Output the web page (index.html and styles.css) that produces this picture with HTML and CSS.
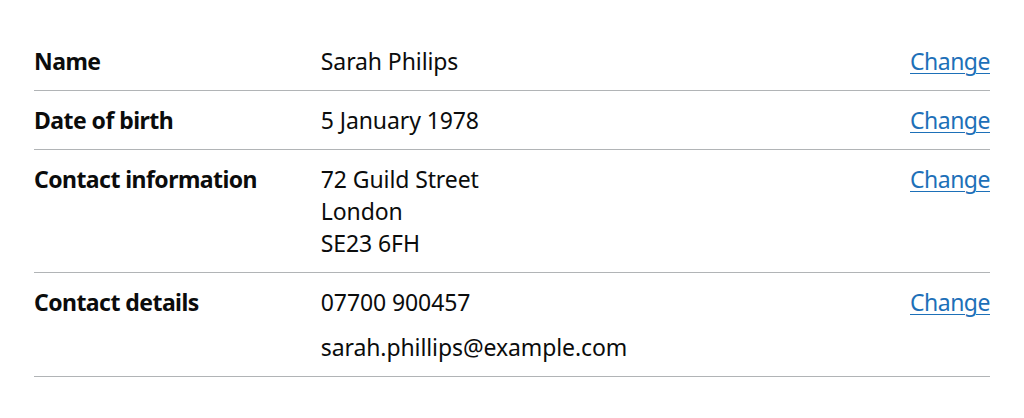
FILE: index.html
```html
<!DOCTYPE html>
<html lang="en">
<head>
<meta charset="utf-8">
<title>Summary list</title>
<link rel="stylesheet" href="styles.css">
</head>
<body>
<dl class="summary-list">
  <div class="summary-row">
    <dt class="summary-key">Name</dt>
    <dd class="summary-value">Sarah Philips</dd>
    <dd class="summary-actions"><a class="summary-link" href="#">Change</a></dd>
  </div>
  <div class="summary-row">
    <dt class="summary-key">Date of birth</dt>
    <dd class="summary-value">5 January 1978</dd>
    <dd class="summary-actions"><a class="summary-link" href="#">Change</a></dd>
  </div>
  <div class="summary-row">
    <dt class="summary-key">Contact information</dt>
    <dd class="summary-value">72 Guild Street<br>London<br>SE23 6FH</dd>
    <dd class="summary-actions"><a class="summary-link" href="#">Change</a></dd>
  </div>
  <div class="summary-row">
    <dt class="summary-key">Contact details</dt>
    <dd class="summary-value">
      <p class="summary-para">07700 900457</p>
      <p class="summary-para">sarah.phillips@example.com</p>
    </dd>
    <dd class="summary-actions"><a class="summary-link" href="#">Change</a></dd>
  </div>
</dl>
</body>
</html>
```
FILE: styles.css
```css
* { box-sizing: border-box; }
html, body { margin: 0; padding: 0; background: #ffffff; }
body {
  font-family: "Noto Sans", "Liberation Sans", Arial, sans-serif;
  color: #0b0c0c;
  font-size: 23px;
  line-height: 32px;
  padding: 32px 34px;
}
.summary-list { margin: 0; }
.summary-row {
  display: flex;
  border-bottom: 1px solid #b1b4b6;
}
.summary-key,
.summary-value,
.summary-actions {
  margin: 0;
  padding: 13px 20px 13px 0;
}
.summary-key { width: 30%; font-weight: 700; letter-spacing: -0.55px; }
.summary-value { width: 50%; letter-spacing: -0.1px; }
.summary-actions { width: 20%; text-align: right; padding-right: 0; }
.summary-para { margin: 0 0 13px; }
.summary-para:last-child { margin-bottom: 0; }
.summary-link {
  color: #1d70b8;
  letter-spacing: -0.5px;
  text-decoration: underline;
  text-decoration-thickness: 1px;
  text-underline-offset: 3px;
}
```
